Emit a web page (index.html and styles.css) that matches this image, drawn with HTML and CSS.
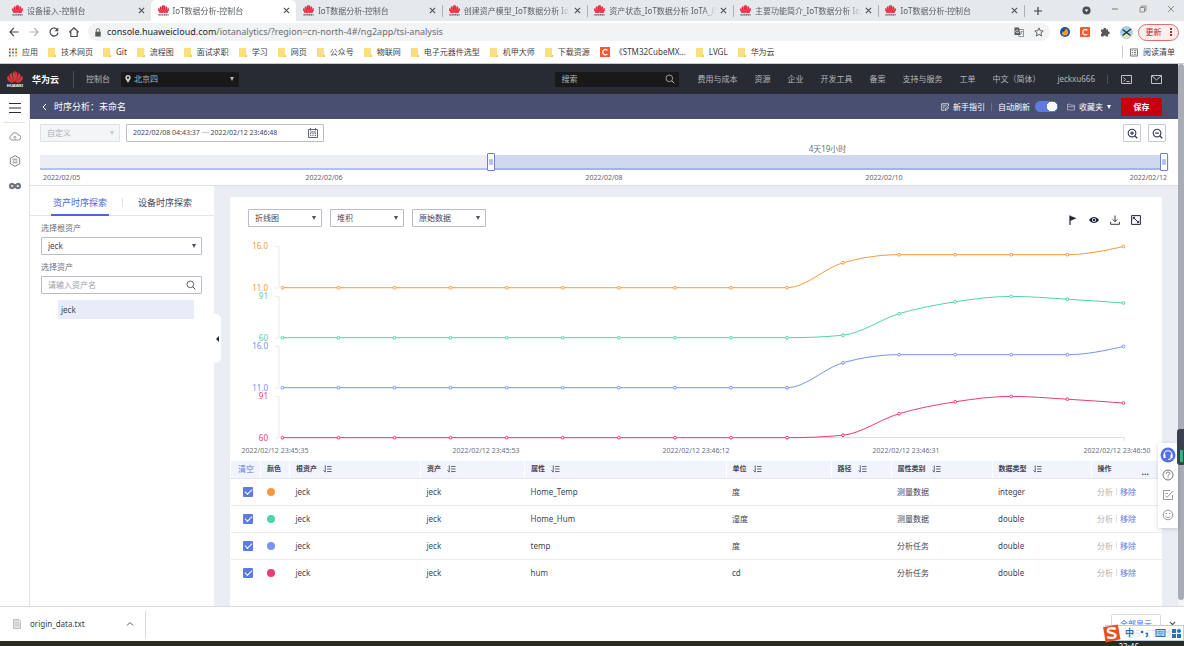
FILE: index.html
```html
<!DOCTYPE html>
<html lang="zh-CN">
<head>
<meta charset="utf-8">
<title>IoT数据分析-控制台</title>
<link rel="stylesheet" href="styles.css">
</head>
<body>
<svg class="sprite" aria-hidden="true">
  <symbol id="petals" viewBox="0 0 24 17">
    <path d="M11.6 15.5C9 11 8 6.500 9.200 2.200 9.700.8 10.600.3 11.400.2 12 5 12.100 10 11.600 15.500z"/>
    <path d="M12.400 15.500C15 11 16 6.500 14.800 2.200 14.300.8 13.400.3 12.600.2 12 5 11.900 10 12.400 15.500z"/>
    <path d="M11 15.700C6.200 12.600 4 9.500 4 6.500 4 4.300 5.200 3 6.800 2.500 7 7 8.600 11.500 11 15.700z"/>
    <path d="M13 15.700C17.800 12.600 20 9.500 20 6.500 20 4.300 18.800 3 17.200 2.500 17 7 15.400 11.500 13 15.700z"/>
    <path d="M10.500 16C5 15.400 1 13.800.5 10.600.3 8.900.9 7.600 1.800 6.600 3.500 11 6.600 13.800 10.500 16z"/>
    <path d="M13.500 16C19 15.400 23 13.800 23.500 10.600 23.700 8.900 23.100 7.600 22.200 6.600 20.500 11 17.400 13.800 13.500 16z"/>
    <path d="M10 16.700C6 17 3.500 17 2 14.300 4.500 15.800 7 16.400 10 16.700zM14 16.700C18 17 20.500 17 22 14.300 19.500 15.800 17 16.400 14 16.700z"/>
  </symbol>
  <symbol id="favicon" viewBox="0 0 24 24">
    <use href="#petals" width="24" height="18" fill="#e8243c" stroke="#e8243c" stroke-width="1"/>
    <path d="M1 21.500h22" stroke="#5a4a50" stroke-width="2.500" stroke-dasharray="3 1"/>
  </symbol>
  <symbol id="close" viewBox="0 0 8 8"><path d="M1 1l6 6M7 1L1 7" fill="none" stroke="currentColor" stroke-width="1.200"/></symbol>
  <symbol id="folder" viewBox="0 0 8 9"><path d="M0 0h7v7h1v2H0z" fill="#fadf7c"/><path d="M7 7h1v2H6z" fill="#e9c65a"/></symbol>
  <symbol id="search" viewBox="0 0 12 12"><circle cx="5.200" cy="5.200" r="4" fill="none" stroke="currentColor"/><path d="M8 8l3.200 3.200" stroke="currentColor" stroke-width="1.200"/></symbol>
  <symbol id="sort" viewBox="0 0 10 8"><path d="M2.500 0v7.500L.4 5.400M4.500 1.200h5M4.500 4h5M4.500 6.800h5" fill="none" stroke="#50566b" stroke-width="1"/></symbol>
</svg>

<div class="tabstrip">
  <div class="tabs">
    <div class="tab"><svg class="fav"><use href="#favicon"/></svg><span class="tab-title">设备接入-控制台</span><button class="x" aria-label="关闭"><svg><use href="#close"/></svg></button></div>
    <div class="tab active"><svg class="fav"><use href="#favicon"/></svg><span class="tab-title">IoT数据分析-控制台</span><button class="x" aria-label="关闭"><svg><use href="#close"/></svg></button></div>
    <div class="tab"><svg class="fav"><use href="#favicon"/></svg><span class="tab-title">IoT数据分析-控制台</span><button class="x" aria-label="关闭"><svg><use href="#close"/></svg></button></div>
    <div class="tab ruled"><svg class="fav"><use href="#favicon"/></svg><span class="tab-title">创建资产模型_IoT数据分析 IoTA_</span><button class="x" aria-label="关闭"><svg><use href="#close"/></svg></button></div>
    <div class="tab ruled"><svg class="fav"><use href="#favicon"/></svg><span class="tab-title">资产状态_IoT数据分析 IoTA_用户</span><button class="x" aria-label="关闭"><svg><use href="#close"/></svg></button></div>
    <div class="tab ruled"><svg class="fav"><use href="#favicon"/></svg><span class="tab-title">主要功能简介_IoT数据分析 IoTA_</span><button class="x" aria-label="关闭"><svg><use href="#close"/></svg></button></div>
    <div class="tab ruled"><svg class="fav"><use href="#favicon"/></svg><span class="tab-title">IoT数据分析-控制台</span><button class="x" aria-label="关闭"><svg><use href="#close"/></svg></button></div>
  </div>
  <div class="window-tools">
    <button class="new-tab" aria-label="新标签页"><svg viewBox="0 0 8 8"><path d="M4 0v8M0 4h8" stroke="#3c4043" stroke-width="1.200"/></svg></button>
    <svg class="tab-search" viewBox="0 0 10 10"><circle cx="5" cy="5" r="4.500" fill="#4a4e52"/><path d="M3 4h4L5 6.800z" fill="#fff"/></svg>
    <svg class="win" viewBox="0 0 8 8"><path d="M1 4h6" stroke="#777"/></svg>
    <svg class="win" viewBox="0 0 8 8"><path d="M1 2.500h4.500V7H1zM2.500 2.500V1H7v4.500H5.500" fill="none" stroke="#777" stroke-width=".8"/></svg>
    <svg class="win" viewBox="0 0 8 8"><path d="M1 1l6 6M7 1L1 7" stroke="#777" stroke-width=".8"/></svg>
  </div>
</div>

<div class="address-row">
  <button class="nav-btn" aria-label="后退"><svg viewBox="0 0 10 10"><path d="M9.500 5H1M4.800 1L1 5l3.800 4" fill="none" stroke="#4a4d51" stroke-width="1.200"/></svg></button>
  <button class="nav-btn" aria-label="前进"><svg viewBox="0 0 10 10"><path d="M.5 5H9M5.200 1L9 5 5.200 9" fill="none" stroke="#b0b3b7" stroke-width="1.200"/></svg></button>
  <button class="nav-btn" aria-label="刷新"><svg viewBox="0 0 10 10"><path d="M8.600 3.200A4 4 0 1 0 9 5.600" fill="none" stroke="#4a4d51" stroke-width="1.200"/><path d="M9.300.5v3.700H5.600z" fill="#4a4d51"/></svg></button>
  <button class="nav-btn" aria-label="主页"><svg viewBox="0 0 10 10"><path d="M.3 5.200L5 .8l4.700 4.400M1.800 4.500v5h6.400v-5" fill="none" stroke="#4a4d51" stroke-width="1.200"/></svg></button>
  <div class="omnibox">
    <svg class="lock" viewBox="0 0 8 10"><path d="M1 4h6v5.500H1z" fill="#55585c"/><path d="M2.200 4V2.500a1.800 1.800 0 0 1 3.600 0V4" fill="none" stroke="#55585c"/></svg>
    <div class="url"><b>console.huaweicloud.com</b>/iotanalytics/?region=cn-north-4#/ng2app/tsi-analysis</div>
    <svg class="omni-icon" viewBox="0 0 10 10"><path d="M4 2.500h5.500v7H5z" fill="#fff" stroke="#777" stroke-width=".8"/><path d="M.5.5H5L6.500 8h-6z" fill="#55585c"/><path d="M4.300 3.400A1.500 1.500 0 1 0 4.600 5H3.300" fill="none" stroke="#fff" stroke-width=".7"/><path d="M6.500 4.500h2.300M8 4.500L6.500 7.500M6.600 5.500l2 2" stroke="#777" stroke-width=".7"/></svg>
    <svg class="omni-icon" viewBox="0 0 10 10"><path d="M5 .9l1.200 2.800 3 .3-2.300 2 .7 3L5 7.400 2.400 9l.7-3L.8 4l3-.3z" fill="none" stroke="#55585c" stroke-width=".9"/></svg>
  </div>
  <div class="extensions">
    <svg viewBox="0 0 10 10"><circle cx="5" cy="5" r="5" fill="#1c4fa0"/><path d="M2 6.500C2 3.500 5 4 6 1.500 9 3.500 9 8 5.500 8.500 3.500 8.700 2 8 2 6.500z" fill="#f09a30"/><path d="M3 3l2 .5L3.500 5z" fill="#222"/></svg>
    <svg viewBox="0 0 10 10"><rect width="10" height="10" rx="1" fill="#fc5531"/><path d="M7.500 3.200C5.500 1.800 2.800 2.500 2.700 5.200c0 2.600 2.800 3.200 4.700 2" fill="none" stroke="#fff" stroke-width="1.300"/></svg>
    <svg viewBox="0 0 10 10"><path d="M1 2.500h2.500a1.400 1.400 0 1 1 2.700 0H8v2a1.400 1.400 0 1 1 0 2.700V9.500H5.900a1.300 1.300 0 0 0-2.500 0H1V7a1.300 1.300 0 0 0 0-2.500z" fill="#55585c"/></svg>
    <svg class="avatar" viewBox="0 0 13 13"><circle cx="6.500" cy="6.500" r="6.500" fill="#a9cfe8"/><path d="M1 9c3-1.500 8-1 11 0a6.500 6.500 0 0 1-11 0z" fill="#dbe5c0"/><path d="M2.500 3.500l8 6M11 3L2.500 9.500" fill="none" stroke="#26352a" stroke-width="1.300"/></svg>
    <button class="update">更新<i></i></button>
  </div>
</div>

<div class="bookmarks">
  <a class="bm" href="#"><svg viewBox="0 0 9 9"><path d="M0 0h2v2H0zM0 7h2v2H0z" fill="#e23b30"/><path d="M3.500 0h2v2h-2zM7 3.500h2v2H7z" fill="#e8502c"/><path d="M7 0h2v2H7zM0 3.500h2v2H0z" fill="#2ba24c"/><path d="M3.500 3.500h2v2h-2z" fill="#3277e6"/><path d="M3.500 7h2v2h-2zM7 7h2v2H7z" fill="#f4b70d"/></svg>应用</a>
  <a class="bm" href="#"><svg><use href="#folder"/></svg>技术网页</a>
  <a class="bm" href="#"><svg><use href="#folder"/></svg>Git</a>
  <a class="bm" href="#"><svg><use href="#folder"/></svg>流程图</a>
  <a class="bm" href="#"><svg><use href="#folder"/></svg>面试求职</a>
  <a class="bm" href="#"><svg><use href="#folder"/></svg>学习</a>
  <a class="bm" href="#"><svg><use href="#folder"/></svg>网页</a>
  <a class="bm" href="#"><svg><use href="#folder"/></svg>公众号</a>
  <a class="bm" href="#"><svg><use href="#folder"/></svg>物联网</a>
  <a class="bm" href="#"><svg><use href="#folder"/></svg>电子元器件选型</a>
  <a class="bm" href="#"><svg><use href="#folder"/></svg>机甲大师</a>
  <a class="bm" href="#"><svg><use href="#folder"/></svg>下载资源</a>
  <a class="bm" href="#"><svg class="csdn" viewBox="0 0 10 10"><rect width="10" height="10" fill="#fc5531"/><path d="M7.500 3.200C5.500 1.800 2.800 2.500 2.700 5.200c0 2.600 2.800 3.200 4.700 2" fill="none" stroke="#fff" stroke-width="1.300"/></svg>《STM32CubeMX...</a>
  <a class="bm" href="#"><svg><use href="#folder"/></svg>LVGL</a>
  <a class="bm" href="#"><svg><use href="#folder"/></svg>华为云</a>
  <a class="bm reading" href="#"><svg viewBox="0 0 9 9"><path d="M.5.5h8v8h-8zM2 2.500h1.500M2 4.500h1.500M2 6.500h1.500M4.500 2.500H7M4.500 4.500H7M4.500 6.500H7" fill="none" stroke="#55585c" stroke-width=".9"/></svg>阅读清单</a>
</div>

<div class="viewport">
  <div class="console">
    <header class="topbar">
      <a class="brand" href="#" aria-label="HUAWEI 华为云"><span class="logo"><svg><use href="#petals" fill="#e53a3c" stroke="#e53a3c" stroke-width=".5"/></svg><small>HUAWEI</small></span><b>华为云</b></a>
      <a class="console-link" href="#">控制台</a>
      <button class="region"><svg viewBox="0 0 8 9"><path d="M4 0a3 3 0 0 1 3 3c0 2-3 5.500-3 5.500S1 5 1 3a3 3 0 0 1 3-3z" fill="#cfd0d4"/><circle cx="4" cy="3" r="1.300" fill="#191919"/></svg>北京四<i class="caret"></i></button>
      <label class="top-search"><input type="text" placeholder="搜索" aria-label="搜索"><svg><use href="#search"/></svg></label>
      <nav class="topnav">
        <a href="#">费用与成本</a><a href="#">资源</a><a href="#">企业</a><a href="#">开发工具</a><a href="#">备案</a><a href="#">支持与服务</a><a href="#">工单</a><a href="#">中文（简体）</a><a href="#">jeckxu666</a>
      </nav>
      <div class="top-icons">
        <svg viewBox="0 0 11 9"><path d="M.5.5h10v8H.500zM2.500 2.500l2 2-2 2M5.500 6.500h3" fill="none" stroke="#c0c2c8"/></svg>
        <svg viewBox="0 0 11 9"><path d="M.5.5h10v8H.500zM.8.8L5.500 5 10.200.8" fill="none" stroke="#c0c2c8"/></svg>
      </div>
    </header>

    <div class="shell">
      <aside class="rail">
        <button class="menu" aria-label="菜单"><svg viewBox="0 0 12 12"><path d="M0 1.500h12M0 6h12M0 10.500h12" stroke="#2a2e3b" stroke-width="1.200"/></svg></button>
        <a href="#" aria-label="设备接入"><svg viewBox="0 0 12 12"><path d="M3 10H2.800a2.400 2.400 0 0 1-.3-4.700A3.600 3.600 0 0 1 9.300 5a2.500 2.500 0 0 1 0 5H3z" fill="none" stroke="#808490" stroke-width=".9"/><path d="M6 9.500V6.300M4.600 7.600L6 6.200l1.400 1.400" fill="none" stroke="#808490" stroke-width=".8"/></svg></a>
        <a href="#" aria-label="设备管理"><svg viewBox="0 0 12 12"><path d="M6 .6l4.700 2.700v5.400L6 11.400 1.300 8.700V3.300z" fill="none" stroke="#70747f" stroke-width=".9"/><path d="M3.500 4.200h5M3.500 6h2.200M6.500 6h2M3.500 7.800h5" fill="none" stroke="#70747f" stroke-width=".8"/></svg></a>
        <a href="#" aria-label="数据分析"><svg viewBox="0 0 12 12"><path d="M6 6C4.800 4.300 4.200 3.800 3.200 3.800a2.200 2.200 0 0 0 0 4.400C5 8.200 7 3.800 8.800 3.800a2.200 2.200 0 0 1 0 4.400C7.800 8.200 7.200 7.700 6 6z" fill="none" stroke="#70747f" stroke-width="2.200"/></svg></a>
      </aside>

      <div class="workspace">
        <div class="titlebar">
          <button class="back" aria-label="返回"><svg viewBox="0 0 5 8"><path d="M4 1L1 4l3 3" fill="none" stroke="#fff"/></svg></button>
          <h1>时序分析：未命名</h1>
          <div class="title-tools">
            <a href="#"><svg viewBox="0 0 8 8"><path d="M7.500 3V.8H.700v6.500h2.500M2 2.800h3.500M2 4.800h1.500M4 7.500l.3-1.700L7 3.600l.8 1L5.500 7z" fill="none" stroke="#e0e2ea" stroke-width=".9"/></svg>新手指引</a>
            <span class="bar"></span>
            <label class="refresh">自动刷新<input type="checkbox" class="switch" checked></label>
            <button class="fav-folder"><svg viewBox="0 0 8 8"><path d="M.5 7V1.200h2.700l.8 1h3.500V7zM.5 3.700h7" fill="none" stroke="#b5b9cc" stroke-width=".8"/></svg>收藏夹<i class="caret"></i></button>
            <button class="save">保存</button>
          </div>
        </div>

        <section class="timebar">
          <div class="time-fields">
            <div class="pick disabled"><select aria-label="时间范围" disabled><option>自定义</option></select></div>
            <label class="date"><input type="text" aria-label="时间区间" value="2022/02/08 04:43:37 ─ 2022/02/12 23:46:48"><svg viewBox="0 0 10 10"><path d="M.5 1.500h9v8h-9zM2.500 0v2.500M7.500 0v2.500M2 4h6" fill="none" stroke="#50566b" stroke-width=".9"/><path d="M2 5.700h6M2 7.600h6" stroke="#50566b" stroke-dasharray="1.200"/></svg></label>
            <div class="zooms">
              <button aria-label="放大"><svg viewBox="0 0 12 12"><circle cx="5.500" cy="5.500" r="4.200" fill="none" stroke="#343a4e" stroke-width="1.200"/><path d="M8.500 8.500l2.700 2.700M3.500 5.500h4M5.500 3.500v4" stroke="#343a4e" stroke-width="1.300"/></svg></button>
              <button aria-label="缩小"><svg viewBox="0 0 12 12"><circle cx="5.500" cy="5.500" r="4.200" fill="none" stroke="#343a4e" stroke-width="1.200"/><path d="M8.500 8.500l2.700 2.700M3.500 5.500h4" stroke="#343a4e" stroke-width="1.300"/></svg></button>
            </div>
          </div>
          <div class="range">
            <div class="range-rest"></div>
            <div class="range-sel"><span class="span-label">4天19小时</span><button class="grip" aria-label="开始时间"></button><button class="grip end" aria-label="结束时间"></button></div>
          </div>
          <div class="dates"><span>2022/02/05</span><span>2022/02/06</span><span>2022/02/08</span><span>2022/02/10</span><span>2022/02/12</span></div>
        </section>

        <div class="columns">
          <section class="explorer">
            <div class="ex-tabs"><button class="on">资产时序探索</button><button>设备时序探索</button></div>
            <div class="ex-body">
              <label for="root">选择根资产</label>
              <div class="pick"><select id="root"><option>jeck</option></select></div>
              <label for="asset">选择资产</label>
              <div class="find"><input id="asset" type="text" placeholder="请输入资产名"><svg><use href="#search"/></svg></div>
              <button class="node">jeck</button>
            </div>
            <button class="collapse" aria-label="收起"></button>
          </section>

          <main class="card">
            <div class="chart-tools">
              <div class="pick"><select aria-label="图表类型"><option>折线图</option></select></div>
              <div class="pick"><select aria-label="排列方式"><option>堆积</option></select></div>
              <div class="pick"><select aria-label="数据"><option>原始数据</option></select></div>
              <div class="chart-icons">
                <button aria-label="标记"><svg viewBox="0 0 10 10"><path d="M2 .5v9.500" stroke="#20263a" stroke-width="1.200"/><path d="M2 .8l6.500 2.500L2 6z" fill="#20263a"/></svg></button>
                <button aria-label="显示"><svg viewBox="0 0 10 10"><path d="M0 5c2.500-4 7.500-4 10 0-2.500 4-7.500 4-10 0z" fill="#20263a"/><circle cx="5" cy="5" r="2" fill="#fff"/><circle cx="5" cy="5" r="1.200" fill="#20263a"/></svg></button>
                <button aria-label="下载"><svg viewBox="0 0 10 10"><path d="M5 .5v6M2.500 4.300L5 6.700l2.500-2.400M.6 7v2.300h8.800V7" fill="none" stroke="#343a4e"/></svg></button>
                <button aria-label="全屏"><svg viewBox="0 0 10 10"><path d="M.6.6h8.800v8.800H.600zM2.500 2.500l5 5M2.300 4.200V2.300h1.900M7.700 5.800v1.900H5.800" fill="none" stroke="#20263a"/></svg></button>
              </div>
            </div>

            <svg class="chart" viewBox="0 0 932 222" role="img" aria-label="时序数据折线图">
              <defs>
                <g id="dots-flat">
                  <circle cx="52.500" cy="51.700" r="1.400"/><circle cx="108.500" cy="51.700" r="1.400"/><circle cx="164.500" cy="51.700" r="1.400"/><circle cx="220.500" cy="51.700" r="1.400"/><circle cx="276.700" cy="51.700" r="1.400"/><circle cx="332.700" cy="51.700" r="1.400"/><circle cx="388.800" cy="51.700" r="1.400"/><circle cx="444.900" cy="51.700" r="1.400"/><circle cx="500.900" cy="51.700" r="1.400"/><circle cx="557" cy="51.700" r="1.400"/>
                </g>
                <g id="line-temp">
                  <path fill="none" d="M52 51.700H556.900C575.600 51.700 594.300 32.200 613 26.800S650.400 18.700 669.100 18.700H837.400C856.100 18.700 874.800 14.600 893.500 10.500"/>
                  <use href="#dots-flat"/>
                  <circle cx="613" cy="26.800" r="1.400"/><circle cx="669.100" cy="18.700" r="1.400"/><circle cx="725.200" cy="18.700" r="1.400"/><circle cx="781.300" cy="18.700" r="1.400"/><circle cx="837.400" cy="18.700" r="1.400"/><circle cx="893.500" cy="10.500" r="1.400"/>
                </g>
                <g id="line-hum">
                  <path fill="none" d="M52 51.700H556.900C575.600 51.700 594.300 51.100 613 49.200 631.700 47.300 650.400 33.300 669.100 27.700 687.800 22.100 706.500 18.700 725.200 15.800 743.900 12.900 762.600 10.400 781.300 10.400 800 10.400 818.700 12.100 837.400 13.200 856.100 14.300 874.800 15.700 893.500 17"/>
                  <use href="#dots-flat"/>
                  <circle cx="613" cy="49.200" r="1.400"/><circle cx="669.100" cy="27.700" r="1.400"/><circle cx="725.200" cy="15.800" r="1.400"/><circle cx="781.300" cy="10.400" r="1.400"/><circle cx="837.400" cy="13.200" r="1.400"/><circle cx="893.500" cy="17" r="1.400"/>
                </g>
              </defs>
              <path class="y-axis" d="M45 10.500h4V52h-4M45 60.500h4V102h-4M45 110.500h4V152h-4M45 160.500h4V202h-4"/>
              <path class="x-axis" d="M52 205v-3.500H894v3.500"/>
              <g class="series orange"><use href="#line-temp"/><text x="38" y="13">16.0</text><text x="38" y="55">11.0</text></g>
              <g class="series green"><use href="#line-hum" y="50"/><text x="38" y="63">91</text><text x="38" y="105">60</text></g>
              <g class="series blue"><use href="#line-temp" y="100"/><text x="38" y="113">16.0</text><text x="38" y="155">11.0</text></g>
              <g class="series pink"><use href="#line-hum" y="150"/><text x="38" y="163">91</text><text x="38" y="205">60</text></g>
              <g class="x-labels"><text x="45" y="217">2022/02/12 23:45:35</text><text x="256" y="217">2022/02/12 23:45:53</text><text x="466" y="217">2022/02/12 23:46:12</text><text x="676" y="217">2022/02/12 23:46:31</text><text x="887" y="217">2022/02/12 23:46:50</text></g>
            </svg>

            <table>
              <colgroup><col class="c-check"><col class="c-color"><col class="c-root"><col class="c-asset"><col><col class="c-unit"><col class="c-path"><col class="c-kind"><col class="c-type"><col class="c-ops"></colgroup>
              <thead><tr>
                <th><a href="#">清空</a></th><th>颜色</th><th>根资产<svg><use href="#sort"/></svg></th><th>资产<svg><use href="#sort"/></svg></th><th>属性<svg><use href="#sort"/></svg></th><th>单位<svg><use href="#sort"/></svg></th><th>路径<svg><use href="#sort"/></svg></th><th>属性类别<svg><use href="#sort"/></svg></th><th>数据类型<svg><use href="#sort"/></svg></th><th><div class="ops-head">操作<button class="more" aria-label="更多">...</button></div></th>
              </tr></thead>
              <tbody>
                <tr><td><input type="checkbox" aria-label="Home_Temp" checked></td><td><i class="dot orange"></i></td><td>jeck</td><td>jeck</td><td>Home_Temp</td><td>度</td><td></td><td>测量数据</td><td>integer</td><td><span class="ops"><span>分析</span><a href="#">移除</a></span></td></tr>
                <tr><td><input type="checkbox" aria-label="Home_Hum" checked></td><td><i class="dot green"></i></td><td>jeck</td><td>jeck</td><td>Home_Hum</td><td>湿度</td><td></td><td>测量数据</td><td>double</td><td><span class="ops"><span>分析</span><a href="#">移除</a></span></td></tr>
                <tr><td><input type="checkbox" aria-label="temp" checked></td><td><i class="dot blue"></i></td><td>jeck</td><td>jeck</td><td>temp</td><td>度</td><td></td><td>分析任务</td><td>double</td><td><span class="ops"><span>分析</span><a href="#">移除</a></span></td></tr>
                <tr><td><input type="checkbox" aria-label="hum" checked></td><td><i class="dot pink"></i></td><td>jeck</td><td>jeck</td><td>hum</td><td>cd</td><td></td><td>分析任务</td><td>double</td><td><span class="ops"><span>分析</span><a href="#">移除</a></span></td></tr>
              </tbody>
            </table>
          </main>
        </div>
      </div>
    </div>

    <div class="helpers">
      <button aria-label="客服"><svg viewBox="0 0 16 16"><circle cx="8" cy="8" r="7.500" fill="#5573e0"/><path d="M4.200 9V7.500a3.800 3.800 0 0 1 7.600 0V9M8 12.500c2 0 3.500-1 3.800-3" fill="none" stroke="#fff" stroke-width="1.100"/><path d="M3.500 7.500h2v3.500h-2zM10.500 7.500h2v3.500h-2z" fill="#fff"/></svg></button>
      <button aria-label="帮助"><svg viewBox="0 0 16 16"><circle cx="8" cy="8" r="5" fill="none" stroke="#70747f"/><path d="M6.300 6.800c0-2.400 3.400-2.200 3.400-.2C9.700 7.900 8 7.700 8 9.200M8 10.200v1.100" fill="none" stroke="#70747f"/></svg></button>
      <button aria-label="反馈"><svg viewBox="0 0 16 16"><path d="M12.500 8v4.500h-9v-9H10M5.500 6.500h2.500M5.500 8.800l1.700 1.500L12.800 4" fill="none" stroke="#8a8e98" stroke-width=".9"/></svg></button>
      <button aria-label="满意度"><svg viewBox="0 0 16 16"><circle cx="8" cy="8" r="4.800" fill="none" stroke="#8a8e98" stroke-width=".9"/><path d="M5.500 9.300c1 2 4 2 5 0M5.700 6.500h1.300M9 6.500h1.300" fill="none" stroke="#8a8e98" stroke-width=".9"/></svg></button>
    </div>
  </div>
  <div class="scroll"><div class="thumb"></div></div>
  <div class="meter"><i></i></div>
</div>

<footer class="downloads">
  <button class="file"><svg viewBox="0 0 9 11"><path d="M.5.500h6l2 2v8h-8z" fill="#e4e6e6" stroke="#9a9c9c" stroke-width=".7"/><path d="M2 3.500h4M2 5.500h5M2 7.500h5" stroke="#b8baba" stroke-width=".8"/></svg><span>origin_data.txt</span><svg class="up" viewBox="0 0 8 8"><path d="M1 5.500l3-3 3 3" fill="none" stroke="#55585c"/></svg></button>
  <button class="show-all">全部显示</button>
  <button class="x" aria-label="关闭下载栏"><svg><use href="#close"/></svg></button>
</footer>
<div class="taskbar"><span>23:46</span></div>

<div class="ime">
  <span class="mark">@51CTO博客</span>
  <svg class="sogou" viewBox="0 0 18 18"><path d="M1 3l14-2.500 2.500 14L3.500 17.500z" fill="#ee4e1c"/><path d="M13 4.500C9 3.500 5.500 4 5.500 6.300c0 2.600 7.300 1.500 7.300 4.500 0 2.700-5 2.800-8 1.700" fill="none" stroke="#fff" stroke-width="2.200"/></svg>
  <b>中</b>
  <svg viewBox="0 0 9 9"><circle cx="2" cy="3" r="1.300" fill="#1a70c8"/><path d="M5.500 4.500h2v2L6 8" fill="none" stroke="#1a70c8" stroke-width="1.300"/></svg>
  <svg class="keys" viewBox="0 0 10 8"><rect x=".5" y=".5" width="9" height="7" fill="#cfe3f7" stroke="#1a70c8"/><path d="M2 2.700h6M2 4.200h6M3 6h4" stroke="#1a70c8" stroke-width=".9" stroke-dasharray="1 .4"/></svg>
  <svg viewBox="0 0 9 9"><path d="M0 0h4v4H0zM0 5h4v4H0zM5 5h4v4H5z" fill="#1a70c8"/><circle cx="7" cy="2" r="2" fill="#1a70c8"/></svg>
</div>
</body>
</html>
```
FILE: styles.css
```css
* { box-sizing: border-box; }

body {
  margin: 0;
  min-height: 100vh;
  display: flex;
  flex-direction: column;
  overflow: hidden;
  background: #fff;
  color: #3f4558;
  font: 8px/12px "Noto Sans", "Noto Sans CJK SC", sans-serif;
}

button, input, select { font: inherit; color: inherit; margin: 0; padding: 0; border: 0; background: none; }
button { display: flex; align-items: center; justify-content: center; }
a { color: inherit; text-decoration: none; }
svg { display: block; flex: none; }
.sprite { position: absolute; width: 0; height: 0; }

/* Browser tabs */
.tabstrip { display: flex; height: 21px; padding-left: 5px; background: #e6e9ec; }
.tabs { flex: 1; display: flex; min-width: 0; }
.tab { flex: 1; min-width: 0; display: flex; align-items: center; padding: 0 6px 0 7px; color: #5a5e63; }
.tab.active { background: #fff; border-radius: 5px 5px 0 0; }
.tab.ruled { background: linear-gradient(#aeb2b6, #aeb2b6) 0 5px / 1px 12px no-repeat; }
.tab .fav { width: 11px; height: 11px; }
.tab-title { flex: 1; margin: 0 4px; white-space: nowrap; overflow: hidden; mask-image: linear-gradient(90deg, #000 88%, transparent); }
.x { width: 7px; height: 7px; color: #4a4d51; }
.x svg { width: 7px; height: 7px; }
.window-tools { width: 160px; display: flex; align-items: center; padding: 0 10px; gap: 20px; background: linear-gradient(#aeb2b6, #aeb2b6) 0 5px / 1px 12px no-repeat; }
.new-tab, .new-tab svg { width: 8px; height: 8px; }
.new-tab { margin-right: 20px; }
.tab-search { width: 9px; height: 9px; }
.win { width: 8px; height: 8px; margin-bottom: 3px; }

/* Address bar */
.address-row { display: flex; align-items: center; height: 21px; padding: 1px 5px 0 9px; gap: 10px; }
.nav-btn, .nav-btn svg { width: 10px; height: 10px; }
.omnibox { flex: 1; display: flex; align-items: center; height: 18px; margin-left: -1px; padding: 0 6px; border-radius: 9px; background: #f1f3f4; }
.lock { width: 8px; height: 9px; }
.url { flex: 1; margin-left: 5px; font-size: 9px; color: #6a6e73; }
.url b { font-weight: 400; color: #25282c; }
.omni-icon { width: 10px; height: 10px; margin-left: 10px; }
.extensions { display: flex; align-items: center; gap: 10px; }
.extensions svg { width: 10px; height: 10px; }
.extensions .avatar { width: 13px; height: 13px; }
.update { width: 41px; height: 17px; gap: 8px; margin-left: -5px; border: 1px solid #d9706a; border-radius: 9px; background: #fceeed; color: #c5221f; }
.update i { width: 2px; height: 8px; background: repeating-linear-gradient(#c5221f 0 2px, transparent 2px 3px); }

/* Bookmarks */
.bookmarks { display: flex; align-items: center; gap: 10px; height: 22px; padding: 0 9px 1px; color: #3c4043; border-bottom: 1px solid #c9cbce; }
.bm { display: flex; align-items: center; gap: 5px; white-space: nowrap; }
.bm svg { width: 8px; height: 9px; }
.bm .csdn { width: 10px; height: 10px; }
.reading { margin-left: auto; padding-left: 7px; border-left: 1px solid #c9cbce; }

/* Console header */
.viewport { flex: 1; display: flex; position: relative; }
.console { flex: 1; min-width: 0; display: flex; flex-direction: column; position: relative; }
.topbar { display: flex; align-items: center; height: 30px; padding: 0 16px 0 6px; background: #282b33; color: #b4b6bc; }
.brand { display: flex; align-items: center; gap: 8px; padding-right: 14px; border-right: 1px solid #4a4d55; line-height: 9px; }
.brand b { font-size: 9px; color: #fff; }
.logo { width: 18px; display: flex; flex-direction: column; align-items: center; }
.logo svg { width: 16px; height: 12px; }
.logo small { font-size: 4px; line-height: 5px; font-weight: 700; color: #fff; }
.console-link { margin: 0 11px 0 12px; }
.region { width: 118px; height: 15px; padding: 0 5px 0 3px; gap: 2px; background: #191919; border-radius: 1px; justify-content: flex-start; }
.region svg { width: 8px; height: 8px; }
.caret { width: 0; height: 0; border: 2px solid transparent; border-top: 4px solid currentColor; border-bottom: 0; }
.region .caret { margin-left: auto; }
.top-search { width: 124px; height: 15px; display: flex; align-items: center; margin-left: auto; padding: 0 4px 0 6px; background: #191919; border-radius: 1px; }
.top-search input { flex: 1; min-width: 0; }
.top-search input::placeholder { color: #b4b6bc; opacity: 1; }
.top-search svg { width: 10px; height: 10px; }
.topnav { display: flex; gap: 17px; margin-left: 18px; }
.topnav a { white-space: nowrap; }
.top-icons { display: flex; gap: 19px; margin-left: 12px; padding-left: 13px; border-left: 1px solid #4a4d55; }
.top-icons svg { width: 11px; height: 9px; }

.shell { flex: 1; display: flex; min-height: 0; }
.rail { width: 30px; display: flex; flex-direction: column; align-items: center; gap: 13px; border-right: 1px solid #dfe1e6; }
.rail svg { width: 12px; height: 12px; }
.rail .menu { width: 21px; height: 29px; border-bottom: 1px solid #dfe1e6; margin-bottom: -6px; }
.workspace { flex: 1; min-width: 0; display: flex; flex-direction: column; }

.titlebar { display: flex; align-items: center; height: 25px; padding: 0 16px 0 12px; background: #484f70; color: #fff; }
.back { width: 5px; height: 8px; }
.back svg { width: 5px; height: 8px; }
h1 { margin: 0 0 0 7px; font-size: 9px; line-height: 12px; font-weight: 400; }
.title-tools { display: flex; align-items: center; margin-left: auto; }
.title-tools a { display: flex; align-items: center; gap: 4px; }
.title-tools svg { width: 8px; height: 8px; }
.bar { width: 1px; height: 8px; margin: 0 6px; background: #6b7190; }
.refresh { display: flex; align-items: center; gap: 5px; }
.switch { appearance: none; width: 23px; height: 11px; border-radius: 6px; background: radial-gradient(circle at 17px 50%, #fff 5px, #5e7ce0 5px); }
.fav-folder { gap: 4px; margin: 0 10px 0 9px; }
.save { width: 41px; height: 18px; background: #c7000b; font-weight: 700; border-radius: 1px; }

/* Time range */
.timebar { padding: 5px 9px 1px 10px; border-bottom: 1px solid #dcdfe6; background: #fff; }
.time-fields { display: flex; gap: 6px; }
.pick { position: relative; width: 80px; height: 18px; }
.pick select { appearance: none; width: 100%; height: 100%; padding: 0 6px; border: 1px solid #b9bdc8; border-radius: 1px; background: #fff; color: #3f4558; }
.pick::after { content: ""; position: absolute; right: 6px; top: 7px; border: 2px solid transparent; border-top: 4px solid #4a5063; border-bottom: 0; pointer-events: none; }
.disabled select { background: #f4f5f6; border-color: #dfe1e6; color: #aeb1ba; opacity: 1; }
.disabled::after { border-top-color: #c3c5cb; }
.date { width: 198px; height: 18px; display: flex; align-items: center; padding: 0 5px 0 6px; border: 1px solid #b9bdc8; border-radius: 1px; font-size: 7px; }
.date input { flex: 1; min-width: 0; }
.date svg { width: 10px; height: 10px; }
.zooms { display: flex; gap: 7px; margin-left: auto; padding-right: 3px; }
.zooms button { width: 18px; height: 18px; border: 1px solid #c6c9d2; border-radius: 1px; }
.zooms svg { width: 11px; height: 11px; }
.range { display: flex; height: 15px; margin-top: 13px; padding-right: 5px; background: #eceef4; }
.range-rest { flex: 451; border-bottom: 2px solid #b4c2f2; }
.range-sel { flex: 673; position: relative; background: #d0d8f0; border-bottom: 2px solid #a3b3ee; }
.span-label { position: absolute; left: 0; right: 0; top: -12px; text-align: center; color: #6a6f7f; }
.grip { position: absolute; left: -4px; top: -2px; width: 8px; height: 18px; border: 1px solid #6f82c8; border-radius: 1px; background: #fff; }
.grip::before { content: ""; width: 4px; height: 6px; border-radius: 1px; background: #b4c2f2; }
.grip.end { left: auto; right: -4px; }
.dates { display: grid; grid-template-columns: 141fr 280fr 280fr 280fr 143fr; padding: 2px 2px 0 3px; color: #5f6474; font-size: 7px; }
.dates span:nth-child(n+2) { text-align: center; }
.dates span:last-child { text-align: right; }

/* Asset explorer */
.columns { flex: 1; display: flex; background: #ebedf4; min-height: 0; }
.explorer { position: relative; width: 184px; margin-right: 16px; background: #fff; }
.ex-tabs { display: flex; height: 30px; padding: 6px 21px 0; gap: 27px; border-bottom: 1px solid #e3e5ec; font-size: 9px; }
.ex-tabs button { height: 24px; padding: 0 2px; border-bottom: 2px solid transparent; white-space: nowrap; }
.ex-tabs .on { color: #4668d8; border-color: #4668d8; position: relative; }
.ex-tabs .on::after { content: ""; position: absolute; right: -14px; top: 6px; width: 1px; height: 9px; background: #e0e2e8; }
.ex-body { display: flex; flex-direction: column; padding: 6px 12px 0 11px; }
.ex-body label { color: #6a6f7f; margin-bottom: 3px; }
.ex-body .pick { width: auto; margin-bottom: 6px; }
.find { display: flex; align-items: center; height: 18px; padding: 0 5px 0 6px; border: 1px solid #b9bdc8; border-radius: 1px; margin-bottom: 6px; }
.find input { flex: 1; min-width: 0; }
.find input::placeholder { color: #9a9eaa; opacity: 1; }
.find svg { width: 10px; height: 10px; }
.node { height: 19px; margin: 0 8px 0 17px; padding-left: 3px; justify-content: flex-start; background: #e8ecf9; }
.collapse { position: absolute; left: 100%; top: 128px; width: 7px; height: 49px; padding-left: 2px; border-radius: 0 5px 5px 0; background: #fff; justify-content: flex-start; }
.collapse::before { content: ""; border: 3px solid transparent; border-right: 3px solid #20263a; border-left: 0; }

/* Chart card */
.card { flex: 1; min-width: 0; margin: 11px 16px 0 0; background: #fff; }
.chart-tools { display: flex; gap: 8px; padding: 12px 21px 9px 18px; }
.chart-tools .pick { width: 74px; }
.chart-icons { display: flex; align-items: center; gap: 11px; margin-left: auto; padding-top: 4px; }
.chart-icons svg { width: 10px; height: 10px; }
.chart { width: 100%; height: auto; }
.y-axis { fill: none; stroke: #e9eaee; }
.x-axis { fill: none; stroke: #dcdee5; }
.series { stroke: currentColor; fill: #fff; }
.series text { stroke: none; fill: currentColor; text-anchor: end; font-size: 8px; }
.x-labels { fill: #6a6f7f; text-anchor: middle; font-size: 7px; }
.orange { color: #fa9841; }
.green { color: #50d4ab; }
.blue { color: #7693f5; }
.pink { color: #eb3b77; }

/* Series table */
table { width: 100%; table-layout: fixed; border-collapse: collapse; margin-top: 3px; }
.c-check { width: 30px; }
.c-color { width: 29px; }
.c-root { width: 131px; }
.c-asset { width: 104px; }
.c-unit { width: 105px; }
.c-path { width: 60px; }
.c-kind { width: 101px; }
.c-type { width: 99px; }
.c-ops { width: 71px; }
th, td { padding: 0 0 0 6px; text-align: left; white-space: nowrap; }
th { height: 17px; background: #f1f4fc; font-size: 7px; font-weight: 700; border-left: 1px solid #fff; border-bottom: 1px solid #e3e6ee; }
th:first-child { padding: 0 0 0 7px; }
th a { color: #5e7ce0; font-weight: 400; font-size: 8px; }
th svg { display: inline-block; width: 9px; height: 8px; margin-left: 6px; vertical-align: -2px; }
td { height: 27px; border-bottom: 1px solid #e8eaef; }
tbody tr:last-child td { border-bottom: 0; }
td:first-child { padding-left: 12px; }
td input { appearance: none; display: block; width: 10px; height: 10px; border-radius: 1px; background: #5e7ce0; position: relative; }
td input::after { content: ""; position: absolute; left: 2px; top: 2px; width: 6px; height: 3px; border: solid #fff; border-width: 0 0 1px 1px; transform: rotate(-45deg); }
.dot { display: block; width: 8px; height: 8px; border-radius: 50%; background: currentColor; }
.ops-head { display: flex; justify-content: space-between; padding-right: 13px; }
.more { padding-top: 5px; height: 12px; font-size: 9px; }
.ops { display: flex; color: #aeb1ba; }
.ops a { margin-left: 3px; padding-left: 4px; color: #5e7ce0; background: linear-gradient(#dfe1e6, #dfe1e6) 0 50% / 1px 7px no-repeat; }

/* Floating helpers */
.helpers { position: absolute; right: 0; top: 379px; width: 20px; padding: 4px 0 5px; display: flex; flex-direction: column; align-items: center; gap: 4px; background: #fff; box-shadow: 0 1px 4px rgba(40, 50, 80, .2); }
.helpers svg { width: 16px; height: 16px; }
.scroll { width: 6px; padding: 0 0 6px; display: flex; background: #f4f5f6; }
.thumb { flex: 1; border-radius: 3px; background: #a9acb5; }
.meter { position: absolute; right: 0; top: 365px; width: 7px; height: 36px; display: flex; align-items: flex-end; padding: 3px 1px 3px 3px; border-radius: 3px 0 0 3px; background: #3a3f4d; }
.meter i { flex: 1; height: 12px; background: #3fae7c; }

/* Downloads */
.downloads { display: flex; align-items: center; height: 35px; padding-right: 8px; border-top: 1px solid #dadce0; color: #3c4043; }
.file { width: 146px; height: 27px; padding: 0 11px 0 13px; justify-content: flex-start; border-right: 1px solid #dadce0; }
.file svg { width: 8px; height: 10px; }
.file span { margin-left: 9px; }
.file .up { width: 8px; height: 8px; margin-left: auto; }
.show-all { width: 50px; height: 20px; margin: 0 8px 0 auto; border: 1px solid #dadce0; border-radius: 2px; color: #1a73e8; }
.taskbar { display: flex; justify-content: flex-end; height: 5px; padding: 2px 45px 0 0; overflow: hidden; background: #2b2b22; color: #fff; line-height: 8px; }

.ime { position: fixed; right: 0; bottom: 5px; display: flex; align-items: center; gap: 6px; height: 16px; padding: 0 2px; background: #fff; border: 1px solid #b4cfe8; color: #1a70c8; font-size: 9px; }
.ime svg { width: 9px; height: 9px; }
.ime .sogou { width: 19px; height: 19px; margin: 0 -2px 0 -6px; }
.ime .keys { width: 11px; height: 8px; }
.mark { position: absolute; right: 2px; bottom: 0; color: rgba(120, 120, 120, .25); }
```
